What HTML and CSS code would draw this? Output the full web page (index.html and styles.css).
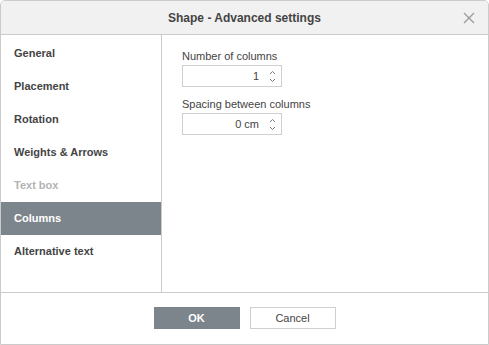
FILE: index.html
```html
<!DOCTYPE html>
<html lang="en">
<head>
  <meta charset="UTF-8" />
  <title>Shape - Advanced settings</title>
  <link rel="stylesheet" href="styles.css">
</head>
<body>

<div class="dialog">
  <header class="dialog-header">
    <span class="title">Shape - Advanced settings</span>
    <span class="close">
      <svg width="12" height="12" viewBox="0 0 12 12"><path d="M1 1L11 11M11 1L1 11" stroke="#989898" stroke-width="1.2" fill="none"/></svg>
    </span>
  </header>

  <div class="dialog-body">
    <ul class="side-menu">
      <li>General</li>
      <li>Placement</li>
      <li>Rotation</li>
      <li>Weights &amp; Arrows</li>
      <li class="disabled">Text box</li>
      <li class="active">Columns</li>
      <li>Alternative text</li>
    </ul>

    <div class="content">
      <label>Number of columns</label>
      <div class="spinner">
        <span class="value">1</span>
        <span class="arrows">
          <svg width="7" height="5" viewBox="0 0 7 5"><path d="M1 4L3.5 1.5L6 4" stroke="#7a7a7a" fill="none"/></svg>
          <svg width="7" height="5" viewBox="0 0 7 5"><path d="M1 1L3.5 3.5L6 1" stroke="#7a7a7a" fill="none"/></svg>
        </span>
      </div>

      <label>Spacing between columns</label>
      <div class="spinner">
        <span class="value">0 cm</span>
        <span class="arrows">
          <svg width="7" height="5" viewBox="0 0 7 5"><path d="M1 4L3.5 1.5L6 4" stroke="#7a7a7a" fill="none"/></svg>
          <svg width="7" height="5" viewBox="0 0 7 5"><path d="M1 1L3.5 3.5L6 1" stroke="#7a7a7a" fill="none"/></svg>
        </span>
      </div>
    </div>
  </div>

  <footer class="dialog-footer">
    <button class="btn primary">OK</button>
    <button class="btn">Cancel</button>
  </footer>
</div>

</body>
</html>
```

FILE: styles.css
```css
body {
  margin: 0;
  font-family: 'Liberation Sans', Arial, sans-serif;
  font-size: 11px;
  color: #444;
  background: #fff;
}
.dialog {
  width: 489px;
  height: 345px;
  box-sizing: border-box;
  border: 1px solid #cbcbcb;
  border-radius: 5px 5px 0 0;
  display: flex;
  flex-direction: column;
  overflow: hidden;
}
.dialog-header {
  height: 33px;
  background: #f1f1f1;
  border-bottom: 1px solid #cbcbcb;
  display: flex;
  align-items: center;
  justify-content: center;
  position: relative;
}
.title {
  font-size: 12px;
  font-weight: bold;
  color: #444;
}
.close {
  position: absolute;
  right: 13px;
  top: 11px;
  width: 12px;
  height: 12px;
}
.close svg {
  display: block;
}
.dialog-body {
  height: 257px;
  display: flex;
  border-bottom: 1px solid #cbcbcb;
}
.side-menu {
  list-style: none;
  margin: 0;
  padding: 2px 0 0;
  width: 160px;
  border-right: 1px solid #cbcbcb;
}
.side-menu li {
  height: 33px;
  line-height: 33px;
  padding-left: 13px;
  font-weight: bold;
  color: #444;
}
.side-menu li.disabled {
  color: #b3b3b3;
}
.side-menu li.active {
  background: #7d858c;
  color: #fff;
}
.content {
  padding: 14px 0 0 20px;
  display: flex;
  flex-direction: column;
  align-items: flex-start;
}
.content label {
  display: block;
  height: 15px;
  line-height: 15px;
  margin-bottom: 1px;
}
.spinner {
  width: 100px;
  height: 22px;
  box-sizing: border-box;
  border: 1px solid #cfcfcf;
  display: flex;
  align-items: center;
  justify-content: flex-end;
  margin-bottom: 10px;
}
.spinner .value {
  padding-right: 5px;
  color: #444;
}
.arrows {
  width: 16px;
  display: flex;
  flex-direction: column;
  align-items: center;
  gap: 3px;
  margin-right: 1px;
}
.arrows svg {
  display: block;
}
.dialog-footer {
  flex: 1;
  display: flex;
  justify-content: center;
  align-items: flex-start;
  gap: 10px;
  padding-top: 14px;
}
.btn {
  width: 86px;
  height: 22px;
  font-family: 'Liberation Sans', Arial, sans-serif;
  font-size: 11px;
  color: #444;
  background: #fff;
  border: 1px solid #cfcfcf;
  padding: 0;
}
.btn.primary {
  background: #7d858c;
  border-color: #7d858c;
  color: #fff;
  font-weight: bold;
}
```
